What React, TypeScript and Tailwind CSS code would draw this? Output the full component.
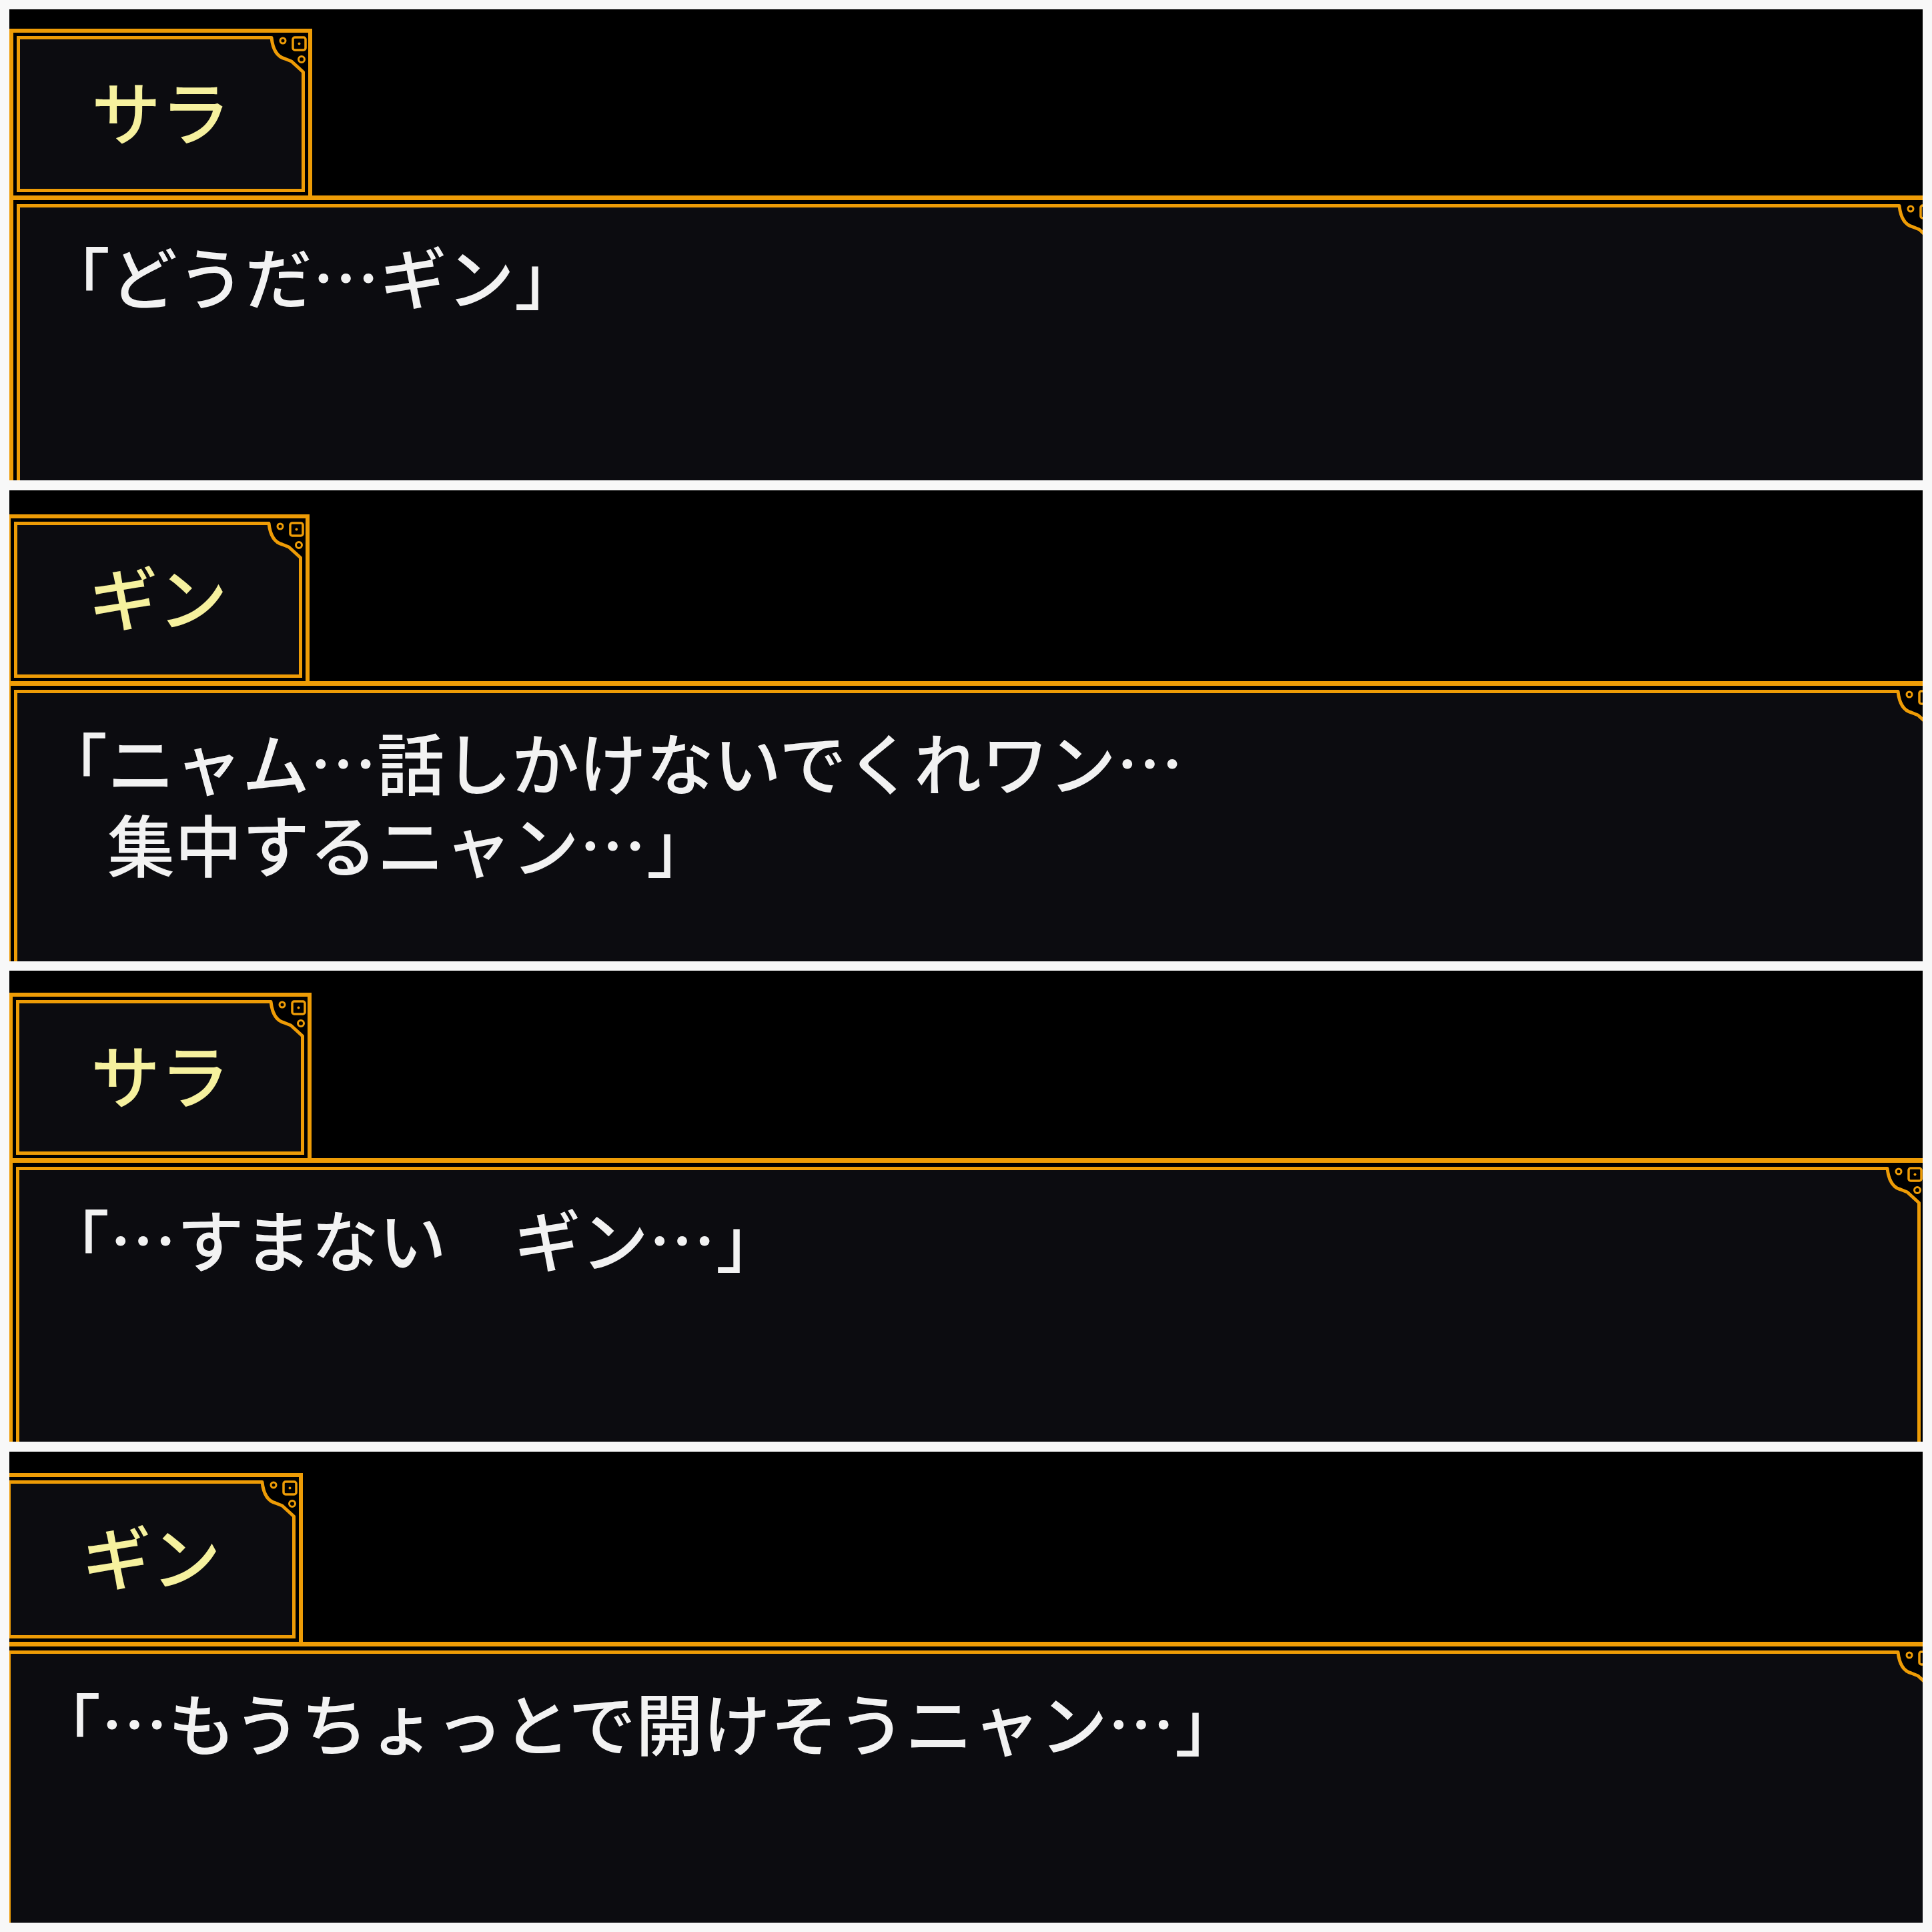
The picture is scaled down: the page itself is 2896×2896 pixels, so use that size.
import React from 'react';

const OR = '#ee9c06';
const BG = '#0c0c10';

function Ornament() {
  return (
    <svg className="absolute top-[-10px] right-[-10px] w-[63px] h-[63px]" viewBox="0 0 63 63">
      <rect x="0" y="0" width="63" height="63" fill="#000" />
      <path d="M0 7.5 L8 7.5 C10 26 16 36 28 39 L38 43 L55.5 59 L55.5 63 L0 63 Z" fill={BG} />
      <path d="M0 7.5 L8 7.5 C10 26 16 36 28 39 L38 43 L55.5 59 L55.5 63" fill="none" stroke={OR} strokeWidth="5" strokeLinejoin="round" />
      <circle cx="25" cy="12" r="4" fill="none" stroke={OR} strokeWidth="3" />
      <rect x="40" y="7" width="19" height="19" rx="3" fill="none" stroke={OR} strokeWidth="3.5" />
      <circle cx="49.5" cy="16.5" r="2" fill={OR} />
      <circle cx="53" cy="40" r="4.5" fill="none" stroke={OR} strokeWidth="3" />
    </svg>
  );
}

type PanelData = {
  name: string;
  lines: string[];
  scene: string;
  nameH: string;
};

const panels: PanelData[] = [
  { name: 'サラ', lines: ['「どうだ…ギン」'], scene: 'ml-0 pt-[29px] w-[2894px]', nameH: 'h-[234px]' },
  { name: 'ギン', lines: ['「ニャム…話しかけないでくれワン…', '　集中するニャン…」'], scene: 'ml-[-4px] pt-[36px] w-[2896px]', nameH: 'h-[234px]' },
  { name: 'サラ', lines: ['「…すまない　ギン…」'], scene: 'ml-[-1px] pt-[33px] w-[2877px]', nameH: 'h-[232px]' },
  { name: 'ギン', lines: ['「…もうちょっとで開けそうニャン…」'], scene: 'ml-[-14px] pt-[32px] w-[2906px]', nameH: 'h-[237px]' },
];

function Panel({ p }: { p: PanelData }) {
  return (
    <div className="h-[706px] w-full bg-black overflow-hidden flex shrink-0">
      <div className={`flex flex-col shrink-0 h-full ${p.scene}`}>
        <div className="w-[454px] shrink-0 border-t-[6px] border-x-[6px] border-[#ee9c06] pt-[5px] px-[5px] pb-[5px]">
          <div className={`relative ${p.nameH} border-[5px] border-[#ee9c06] bg-[#0c0c10] flex items-center justify-center pb-[12px]`}>
            <span className="text-[104px] leading-none font-medium text-[#f6f19e] font-['Noto_Sans_CJK_JP',sans-serif]">{p.name}</span>
            <Ornament />
          </div>
        </div>
        <div className="flex-1 flex flex-col border-t-[7px] border-x-[6px] border-[#ee9c06] pt-[6px] px-[5px]">
          <div className="relative flex-1 border-t-[5px] border-x-[5px] border-[#ee9c06] bg-[#0c0c10] pl-[34px] pt-[40px]">
            <div className="text-[101px] leading-[123px] font-medium text-[#f2f2f2] whitespace-pre font-['Noto_Sans_CJK_JP',sans-serif]">
              {p.lines.map((l, i) => (
                <div key={i}>{l}</div>
              ))}
            </div>
            <Ornament />
          </div>
        </div>
      </div>
    </div>
  );
}

export default function App() {
  return (
    <div className="w-[2896px] h-[2896px] bg-[#f8f8f8] p-[14px] flex flex-col gap-[14.67px]">
      {panels.map((p, i) => (
        <Panel key={i} p={p} />
      ))}
    </div>
  );
}
